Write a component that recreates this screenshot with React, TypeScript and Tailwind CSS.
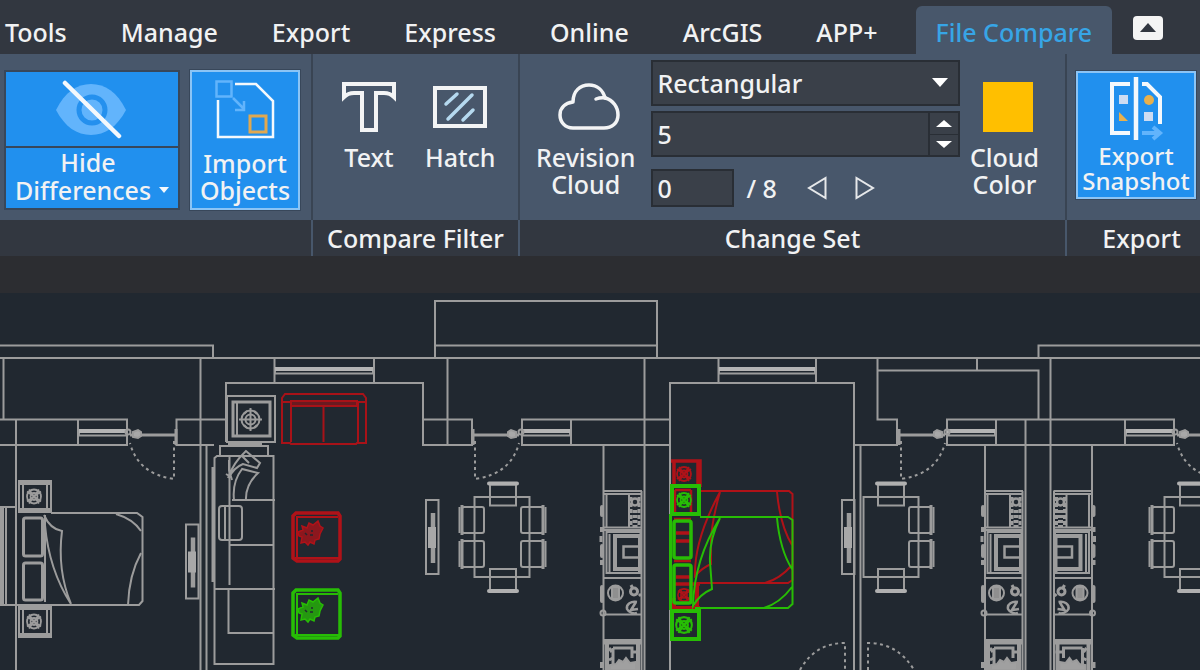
import { useState } from "react";
import type { ReactNode } from "react";

const menuTabs = ["Tools", "Manage", "Export", "Express", "Online", "ArcGIS", "APP+"];

const CHANGE_TOTAL = 8;

function Panel({ title, className, children }: { title: string; className: string; children: ReactNode }) {
    return (
        <section className={`flex flex-col ${className}`}>
            <div className="flex h-[166px] items-start border-r-2 border-[#394453]">{children}</div>
            <h2 className="flex h-9 items-center justify-center border-r-2 border-[#48576b] bg-[#323740]">{title}</h2>
        </section>
    );
}

/* ---------- ribbon icons ---------- */

function EyeOffIcon() {
    return (
        <svg width="76" height="60" viewBox="0 0 76 60" aria-hidden="true">
            <path d="M2 31C11 13 23 5 37 5s26 8 35 26C63 48 51 56 37 56S11 48 2 31Z" fill="#62b4fc" />
            <circle cx="38" cy="31" r="13" fill="#62b4fc" stroke="#2490ee" strokeWidth="5" />
            <path d="M11 4 65 57" stroke="#f4f8fc" strokeWidth="4.5" strokeLinecap="round" />
        </svg>
    );
}

function ImportIcon() {
    return (
        <svg width="60" height="60" viewBox="0 0 60 60" fill="none" aria-hidden="true">
            <path d="M20 4h21l17 17v36H3V20" stroke="#f4f8fc" strokeWidth="2.5" />
            <rect x="1.5" y="1.5" width="15" height="15" stroke="#62b4fc" strokeWidth="2.5" />
            <path d="M18 18l11 11M29 21v9h-9" stroke="#62b4fc" strokeWidth="2.5" />
            <rect x="35" y="36" width="16" height="16" stroke="#e0a850" strokeWidth="3" />
        </svg>
    );
}

function TextIcon() {
    return (
        <svg width="54" height="50" viewBox="0 0 54 50" fill="none" aria-hidden="true">
            <path d="M2 2h50v13c-3-3-6-4-10-4h-8v37H20V11h-8c-4 0-7 1-10 4Z" stroke="#f3f4f5" strokeWidth="4" />
        </svg>
    );
}

function HatchIcon() {
    return (
        <svg width="54" height="50" viewBox="0 0 54 50" fill="none" aria-hidden="true">
            <rect x="2" y="6" width="50" height="38" stroke="#f3f4f5" strokeWidth="4" />
            <path d="M13 22 24 12M15 37 39 13M30 38l10-10" stroke="#b5d9ef" strokeWidth="3.5" strokeLinecap="round" />
        </svg>
    );
}

function CloudIcon() {
    return (
        <svg width="68" height="50" viewBox="-6 0 68 50" fill="none" aria-hidden="true">
            <path
                d="M15 46C7 46 2 40 2 33c0-7 5-12 13-13C15 9 22 3 31 3c8 0 14 5 16 13 8 2 13 9 13 17 0 8-6 13-14 13Z"
                stroke="#f3f4f5"
                strokeWidth="3.5"
                strokeLinejoin="round"
            />
            <path d="M38 17q5-2 10-1" stroke="#f3f4f5" strokeWidth="3.5" strokeLinecap="round" />
        </svg>
    );
}

function SnapshotIcon() {
    return (
        <svg width="56" height="64" viewBox="0 0 56 64" fill="none" aria-hidden="true">
            <path d="M22 7H4v49h18M34 7h5l13 13v27" stroke="#f4f8fc" strokeWidth="4" />
            <path d="M28 0v63" stroke="#f4f8fc" strokeWidth="4.5" />
            <path d="M11 18h9v9h-9zM36 35h9v9h-9z" fill="#cddcf2" />
            <circle cx="41" cy="23" r="5" fill="#e8b04c" />
            <path d="M11 35v9h9Z" fill="#e8b04c" />
            <path d="M34 56h17M45 50l7 6-7 6" stroke="#62b4fc" strokeWidth="4" />
        </svg>
    );
}

/* ---------- floor plan ---------- */

const walls = [
    "M0 345.5H213V358M0 358H1200M435 358V301H657V358M435 345.5H657M1038.5 358V345.5H1200",
    "M3.5 358V419M200.5 358V670M206.5 445V670M16 419V670M0 419.5H127V445H0M78 419.5V445",
    "M226 419.5H176.5V445H214M226 442V383H423V445H472V419.5H423M447.5 358V445M274.5 358V383M374 358V383",
    "M670 419.5H522V445H670M571 419.5V445M603.5 445V670M644.5 358V670",
    "M670 670V383H854V670M718.5 358V383M816 358V383M860.5 445V670M854 445H897V419.5H877.5V358",
    "M877.5 370.5H1038.5V419M977 358V370M947 419.5V445H1174V419.5ZM996 419.5V445M1125 419.5V445",
    "M985 445V670M1025.5 419V670M1050.5 358V670M1092 445V670",
].join("");

function Lamp({ x, y, r }: { x: number; y: number; r: number }) {
    return (
        <g transform={`translate(${x} ${y}) scale(${r / 8})`} strokeWidth="1.8">
            <circle r="7" />
            <circle r="3.5" />
            <path d="M-7-5 7 5M-7 5 7-5M-5-7 5 7M-5 7 5-7" />
        </g>
    );
}

function NightStand({ x, y, h = 31 }: { x: number; y: number; h?: number }) {
    return (
        <g>
            <rect x={x} y={y} width="32" height={h} />
            <path d={`M${x} ${y + 2}h32M${x} ${y + h - 2}h32`} strokeWidth="4" />
            <path d={`M${x + 4} ${y}v${h}M${x + 28} ${y}v${h}`} />
            <Lamp x={x + 15} y={y + h / 2} r={8} />
        </g>
    );
}

function WindowBand({ x, y, w }: { x: number; y: number; w: number }) {
    return (
        <g>
            <path d={`M${x} ${y + 5.5}h${w}M${x} ${y}v6M${x + w} ${y}v6`} />
            <path d={`M${x} ${y + 1}h${w}`} strokeWidth="4" stroke="#b4b4b4" />
        </g>
    );
}

// Door with the hinge on its right hand; flip it for the other hand.
function Door({ x, flip = false }: { x: number; flip?: boolean }) {
    return (
        <g transform={`translate(${x} 0) scale(${flip ? -1 : 1} 1)`}>
            <path d="M1 435H46" strokeWidth="3" />
            <path d="M0 429V445" strokeWidth="3" />
            <path d="M35 432l3-2 5 2v5l-5 1-3-2Z" fill="#a8a8a8" />
            <circle cx="48" cy="432" r="2.5" />
            <path d="M2 441V479Q38 474 46 443" strokeDasharray="3 3.5" />
        </g>
    );
}

function TvUnit({ x, y }: { x: number; y: number }) {
    return (
        <g>
            <rect x={x} y={y} width="12.5" height="74" />
            <path d={`M${x + 7} ${y + 13}v50`} strokeWidth="4.5" />
            <path d={`M${x + 6} ${y + 27}v21`} strokeWidth="8" stroke="#a8a8a8" />
        </g>
    );
}

function ChairV({ x, y, flip = false }: { x: number; y: number; flip?: boolean }) {
    return (
        <g>
            <rect x={x} y={y} width="26" height="21" />
            <path d={`M${x - 1} ${flip ? y + 22 : y - 1}h28`} strokeWidth="4" stroke="#b0b0b0" strokeLinecap="round" />
        </g>
    );
}

function ChairH({ x, y, flip = false }: { x: number; y: number; flip?: boolean }) {
    return (
        <g>
            <rect x={x} y={y} width="22" height="26" rx="2" />
            <path d={`M${flip ? x + 22 : x} ${y - 2}v30`} strokeWidth="3" />
            <path d={`M${flip ? x + 24.5 : x - 2.5} ${y}v26`} />
        </g>
    );
}

function Kitchen() {
    return (
        <g>
            <path d="M641.5 491V670M604 491H642M604 494H642M606.5 494V527M629 495V527M604 527.5H642M604 530H642" />
            <path d="M604 578H642M604 614.5H642M604 640H642" />
            <path d="M631 497v30M639 497v30" strokeWidth="3" strokeDasharray="4 2" />
            <path d="M635 510v17" strokeWidth="5" strokeDasharray="3 2" />
            <circle cx="635" cy="502" r="3.5" strokeWidth="2.5" />
            <rect x="606.5" y="532" width="34" height="41" />
            <path d="M640 536H615V569H640" strokeWidth="4" />
            <path d="M609.5 534V572M639 534V572" />
            <path d="M639 546.5H623.5V557.5H639" strokeWidth="2.5" />
            <circle cx="615.5" cy="593" r="7.5" />
            <path d="M612 587h7v12h-7Z" fill="#8f8f8f" />
            <circle cx="634" cy="591.5" r="3.5" strokeWidth="3" />
            <path d="M631 585l2 4M639 594l2 2" strokeWidth="3" />
            <path d="M637 602c-6-1-11 2-10 7 2 4 7 5 10 4M636 602l-5 8 7-1" strokeWidth="2.5" />
            <path d="M604 642.5H641M607 642V670M638 642V670" strokeWidth="4" />
            <path d="M613 648H632V658M613 648V664" strokeWidth="3" />
            <path d="M610 670V665l6-1 3-4 4 2 3-4 4 5 6-1V670Z" fill="#a0a0a0" />
            <path d="M609 648l3 4M633 652h7M609 660l4-2" strokeWidth="3" />
            <path d="M602 507v8M602 546v10M602 587v14" strokeWidth="4" strokeLinecap="round" />
            <path d="M601.5 527v5M601 536v6M601.5 560v5M601.5 662v6" strokeWidth="3" />
            <circle cx="603" cy="613" r="2.5" />
        </g>
    );
}

function Sofa() {
    return (
        <g>
            <rect x="227" y="396" width="48" height="46" />
            <rect x="233" y="402" width="37" height="34" strokeWidth="3" />
            <path d="M237 403V436" />
            <g strokeWidth="2">
                <circle cx="250.5" cy="419.5" r="9" />
                <circle cx="250.5" cy="419.5" r="5" />
                <path d="M250.5 408V431M239 419.5H262M244 414l3-3M257 414l-3-3M244 425l3 3M257 425l-3 3" />
            </g>
            <path d="M220 455V446H268V455M228 444H262" />
            <path d="M217 456H273.5V664H214.5V458Z" />
            <path d="M213 467V582" strokeWidth="3" />
            <path d="M229.5 456V585M228.5 589V633H273M214 589H275M230 545H273M232 500H275" />
            <rect x="219" y="506" width="23" height="34" rx="3" />
            <path d="M225 507V539" />
            <path d="M228 478q5-15 18-27l14 12-3 5-14-4q-10 4-14 14M241 455l8 8M234 500q-2-18 8-31l16 4q-13 12-12 28M226 474l5 3M229 460v10l3 10" />
        </g>
    );
}

function Bed() {
    return (
        <g>
            <path d="M51 513H137L142.5 517V601L139 605H0M45 515V602" />
            <rect x="23.5" y="518" width="19" height="38" rx="2" strokeWidth="3" />
            <rect x="23.5" y="563" width="19" height="37" rx="2" strokeWidth="3" />
            <path d="M44 515Q50 529 62 531Q57 570 71 604Q49 570 45 525M116 514Q133 519 141 531M141 553Q129 575 128 605" />
            <path d="M0 507H16M6 508V605" />
            <path d="M2 508V605" strokeWidth="4" />
            <NightStand x={19} y={481} />
            <NightStand x={19} y={606} />
        </g>
    );
}

function PlantTable({ y, color }: { y: number; color: string }) {
    return (
        <g transform={`translate(292 ${y})`} stroke={color}>
            <path d="M4 1H46L48 4V47L46 49H5L1 46V4Z" strokeWidth="3.5" />
            <path d="M5 4V47M3 46H47M4 5H46" />
            <path
                d="M6 20l5-2-1-4 5 2 2-5 4 2 5-4 2 5 3 2-3 6-1 5-4 1-1 4-4-2-2 3-3-3-4 1 1-6-3-1Z"
                fill={color}
                fillOpacity="0.75"
                strokeWidth="1.5"
            />
            <path d="M18 23h3M20 18v2M13 21l2 2" stroke="#212830" strokeWidth="1.5" />
        </g>
    );
}

function ChangedBed() {
    return (
        <g>
            <g stroke="#b01218">
                <path d="M671 461H700V487M698 461V487M674 461V487" strokeWidth="3.5" />
                <Lamp x={684} y={474} r={8} />
                <path d="M697 584V610M674 598V608H700" strokeWidth="4" />
                <Lamp x={684} y={595} r={7} />
                <path d="M675 490V513M691 490V513M675 490H691M674 519H691M674 561H691" strokeWidth="2.5" />
                <path d="M676 533H690M676 541H690M676 577H690M674 584H700" strokeWidth="3.5" />
                <path d="M700 491H789L792.5 494V580L788 583H697M720 492Q712 520 711 540V564Q702 568 695 576Q694 540 720 492M777 492Q780 525 792 545M765 583Q780 579 792 565" />
            </g>
            <g stroke="#27bd05">
                <rect x="672" y="486" width="27" height="28" strokeWidth="4" />
                <rect x="672" y="611" width="27" height="28" strokeWidth="4" />
                <Lamp x={684} y={500} r={8} />
                <Lamp x={684} y={625} r={9} />
                <path d="M670.5 514V610" strokeWidth="3" />
                <rect x="674" y="521" width="17" height="37" rx="2" strokeWidth="3.5" />
                <rect x="674" y="565" width="17" height="38" rx="2" strokeWidth="3.5" />
                <path d="M700 517H788L792.5 520V604L788 608H695M720 518Q709 540 710 562L712 589Q700 594 693 606Q694 560 720 518M777 518Q780 550 792 569M764 608Q780 603 792 587" />
            </g>
        </g>
    );
}

function FloorPlan() {
    return (
        <svg
            viewBox="0 293 1200 377"
            className="block w-full"
            role="img"
            aria-label="Floor plan comparison"
            fill="none"
            stroke="#9c9c9c"
            strokeWidth="2"
        >
            <path d={walls} />

            <WindowBand x={275} y={368} w={98} />
            <WindowBand x={719} y={368} w={96} />
            <WindowBand x={79} y={430} w={48} />
            <WindowBand x={522} y={430} w={48} />
            <WindowBand x={947} y={430} w={48} />
            <WindowBand x={1126} y={430} w={48} />

            <Door x={176} flip />
            <Door x={473} />
            <Door x={899} />
            <Door x={1223} flip />
            <path d="M800 670Q815 643 845 643V670M868 670V643Q898 643 914 670" strokeDasharray="3 3.5" />

            <Bed />
            <Sofa />
            <TvUnit x={186} y={524.5} />
            <TvUnit x={426} y={500} />
            <TvUnit x={842} y={500} />

            {/* dining tables */}
            <rect x="474.5" y="497" width="55" height="80" />
            <ChairV x={490} y={484.5} />
            <ChairV x={490} y={569} flip />
            <ChairH x={462} y={507} />
            <ChairH x={462} y={541} />
            <ChairH x={521} y={507} flip />
            <ChairH x={521} y={541} flip />

            <rect x="863.5" y="497" width="55" height="80" />
            <ChairV x={878} y={484.5} />
            <ChairV x={878} y={569} flip />
            <ChairH x={909} y={507} flip />
            <ChairH x={909} y={541} flip />

            <rect x="1164.5" y="497" width="55" height="80" />
            <ChairV x={1180} y={484.5} />
            <ChairV x={1180} y={569} flip />
            <ChairH x={1152} y={507} />
            <ChairH x={1152} y={541} />

            <Kitchen />
            <g transform="translate(381 0)">
                <Kitchen />
            </g>
            <g transform="translate(1695.5 0) scale(-1 1)">
                <Kitchen />
            </g>

            {/* removed objects are red, added ones green */}
            <g stroke="#a81218">
                <path d="M285 394H363L366 398V443H357L356 444H291L290 443H282V398Z" />
                <path d="M291 401H357V406H291Z" fill="#6b1a20" />
                <path d="M283 402H291V442M365 402H358V442M323.5 406V442" />
            </g>
            <PlantTable y={512} color="#b01218" />
            <PlantTable y={589} color="#27bd05" />
            <ChangedBed />
        </svg>
    );
}

export default function App() {
    const [shape, setShape] = useState("Rectangular");
    const [size, setSize] = useState(5);
    const [current, setCurrent] = useState(0);

    return (
        <div className="min-h-screen overflow-hidden bg-[#212830] font-['Noto_Sans',sans-serif] text-[25px] leading-[27px] font-medium text-[#f1f2f3]">
            {/* Menu tabs */}
            <nav className="flex h-[54px] items-end gap-[54px] bg-[#323740] pl-[5px] whitespace-nowrap">
                {menuTabs.map((tab) => (
                    <button key={tab} type="button" className="h-12 pt-1">
                        {tab}
                    </button>
                ))}
                <div className="-ml-4 flex items-end gap-[21px]">
                    <button type="button" className="h-12 rounded-t-md bg-[#48576b] px-5 pt-1 text-[#37a5e6]">
                        File Compare
                    </button>
                    <button
                        type="button"
                        aria-label="Collapse ribbon"
                        className="mb-[14px] flex h-6 w-[30px] items-center justify-center rounded-sm bg-[#f4f4f4]"
                    >
                        <svg width="16" height="10" viewBox="0 0 16 10" aria-hidden="true">
                            <path d="M0 9 8 0l8 9Z" fill="#323740" />
                        </svg>
                    </button>
                </div>
            </nav>

            {/* Ribbon */}
            <main>
                <div className="flex bg-[#48576b] whitespace-nowrap">
                    <Panel title="" className="w-[313px] shrink-0">
                        <div className="flex items-start gap-[10px] pt-4 pl-1">
                            <div className="w-44 border-2 border-[#38475a] bg-[#2190ee] text-center">
                                <button type="button" aria-label="Toggle differences" className="flex h-[74px] w-full items-center justify-center">
                                    <EyeOffIcon />
                                </button>
                                <button type="button" className="h-[62px] w-full border-t-2 border-[#38475a] pb-2 leading-7">
                                    <span className="block pr-2">Hide</span>
                                    <span className="flex items-center justify-center gap-2">
                                        Differences
                                        <svg width="10" height="6" viewBox="0 0 10 6" aria-hidden="true">
                                            <path d="M0 0h10L5 6Z" fill="#f4f8fc" />
                                        </svg>
                                    </span>
                                </button>
                            </div>
                            <button
                                type="button"
                                className="flex h-[140px] w-[110px] flex-col items-center gap-[10px] border-2 border-[#8cc4f5] bg-[#2190ee] pt-2 outline-1 outline-[#38475a]"
                            >
                                <ImportIcon />
                                <span>
                                    Import
                                    <br />
                                    Objects
                                </span>
                            </button>
                        </div>
                    </Panel>

                    <Panel title="Compare Filter" className="w-[207px] shrink-0">
                        <div className="flex gap-[29px] pt-7 pl-[29px]">
                            <button type="button" className="flex flex-col items-center gap-3">
                                <TextIcon />
                                Text
                            </button>
                            <button type="button" className="flex flex-col items-center gap-3">
                                <HatchIcon />
                                Hatch
                            </button>
                        </div>
                    </Panel>

                    <Panel title="Change Set" className="min-w-0 flex-1">
                        <button type="button" className="ml-4 flex shrink-0 flex-col items-center gap-3 pt-7">
                            <CloudIcon />
                            <span>
                                Revision
                                <br />
                                Cloud
                            </span>
                        </button>
                        <div className="ml-4 flex min-w-0 flex-1 flex-col pt-[6px]">
                            <div className="relative">
                                <select
                                    aria-label="Cloud shape"
                                    value={shape}
                                    onChange={(e) => setShape(e.target.value)}
                                    className="h-[46px] w-full appearance-none border-2 border-[#292e35] bg-[#3a4049] px-1 leading-10"
                                >
                                    <option>Rectangular</option>
                                    <option>Polygonal</option>
                                </select>
                                <svg className="pointer-events-none absolute top-[18px] right-3" width="16" height="9" viewBox="0 0 16 9" aria-hidden="true">
                                    <path d="M0 0h16L8 9Z" fill="#fff" />
                                </svg>
                            </div>
                            <div className="mt-[5px] flex h-[46px] border-2 border-[#292e35] bg-[#3a4049]">
                                <input
                                    aria-label="Cloud size"
                                    value={size}
                                    onChange={(e) => setSize(Number(e.target.value) || 0)}
                                    className="w-full min-w-0 px-1 outline-none"
                                />
                                <div className="flex w-[30px] shrink-0 flex-col border-l-2 border-[#292e35]">
                                    <button
                                        type="button"
                                        aria-label="Increase size"
                                        onClick={() => setSize(size + 1)}
                                        className="flex flex-1 items-center justify-center border-b border-[#292e35]"
                                    >
                                        <svg width="16" height="7" viewBox="0 0 16 7" aria-hidden="true">
                                            <path d="M0 7h16L8 0Z" fill="#fff" />
                                        </svg>
                                    </button>
                                    <button
                                        type="button"
                                        aria-label="Decrease size"
                                        onClick={() => setSize(Math.max(0, size - 1))}
                                        className="flex flex-1 items-center justify-center"
                                    >
                                        <svg width="16" height="7" viewBox="0 0 16 7" aria-hidden="true">
                                            <path d="M0 0h16L8 7Z" fill="#fff" />
                                        </svg>
                                    </button>
                                </div>
                            </div>
                            <div className="mt-3 flex items-center">
                                <input
                                    aria-label="Current change"
                                    value={current}
                                    onChange={(e) => setCurrent(Number(e.target.value) || 0)}
                                    className="h-[38px] w-[83px] border-2 border-[#292e35] bg-[#3a4049] px-1 outline-none"
                                />
                                <span className="ml-3">/ {CHANGE_TOTAL}</span>
                                <button
                                    type="button"
                                    aria-label="Previous change"
                                    onClick={() => setCurrent(Math.max(0, current - 1))}
                                    className="ml-[30px]"
                                >
                                    <svg width="20" height="24" viewBox="0 0 20 24" fill="none" aria-hidden="true">
                                        <path d="M18.5 2V22L2 12Z" stroke="#e6e8ea" strokeWidth="2" />
                                    </svg>
                                </button>
                                <button
                                    type="button"
                                    aria-label="Next change"
                                    onClick={() => setCurrent(Math.min(CHANGE_TOTAL, current + 1))}
                                    className="ml-7"
                                >
                                    <svg width="20" height="24" viewBox="0 0 20 24" fill="none" aria-hidden="true">
                                        <path d="M1.5 2V22L18 12Z" stroke="#e6e8ea" strokeWidth="2" />
                                    </svg>
                                </button>
                            </div>
                        </div>
                        <button type="button" className="mr-[26px] ml-[10px] flex shrink-0 flex-col items-center gap-3 pt-7">
                            <span className="mr-[6px] size-[50px] self-end bg-[#ffbf00]" />
                            <span>
                                Cloud
                                <br />
                                Color
                            </span>
                        </button>
                    </Panel>

                    <section className="w-[133px] shrink-0">
                        <div className="h-[166px] pt-[17px] pl-[9px]">
                            <button
                                type="button"
                                className="flex h-32 w-[120px] flex-col items-center gap-[2px] border-2 border-[#8cc4f5] bg-[#2190ee] pt-1 text-[24px] leading-[25px] outline-1 outline-[#38475a]"
                            >
                                <SnapshotIcon />
                                <span>
                                    Export
                                    <br />
                                    Snapshot
                                </span>
                            </button>
                        </div>
                        <h2 className="flex h-9 items-center justify-center bg-[#323740] pl-4">Export</h2>
                    </section>
                </div>

                <div className="h-[37px] bg-[#2c2d31]" />
                <FloorPlan />
            </main>
        </div>
    );
}
